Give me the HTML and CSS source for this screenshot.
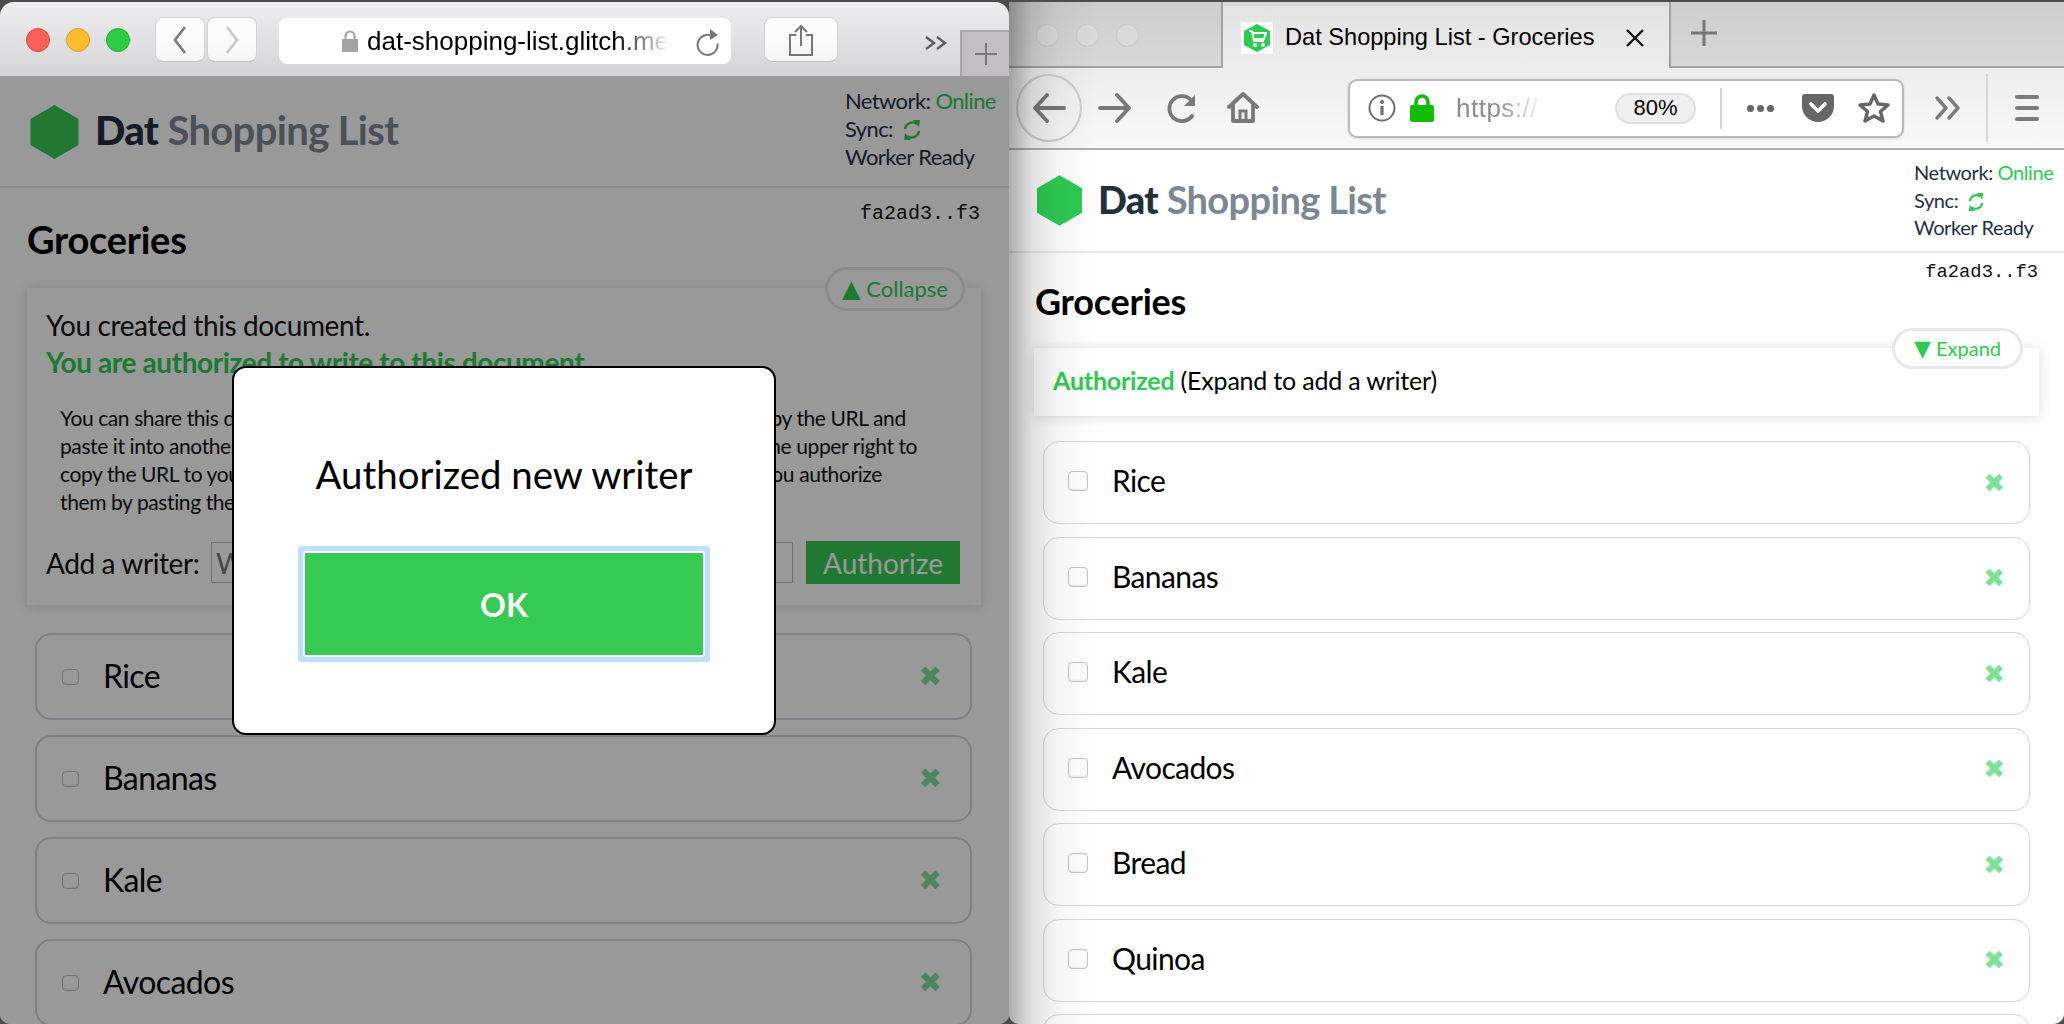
FILE: index.html
```html
<!DOCTYPE html>
<html lang="en">
<head>
  <meta charset="UTF-8">
  <title>Dat Shopping List - Groceries</title>
  <link rel="stylesheet" href="styles.css">
</head>
<body>

<div class="desktop">

  <!-- left window: safari with the dialog open -->
  <section class="safari">
    <div class="saf-toolbar">
      <div class="lights">
        <span class="light red"></span>
        <span class="light yellow"></span>
        <span class="light green"></span>
      </div>
      <div class="nav-pair">
        <button class="saf-btn nav-btn">
          <svg width="20" height="32" viewBox="0 0 20 32"><path d="M15 3 L5 16 L15 29" fill="none" stroke="#7b7b7b" stroke-width="2.6"/></svg>
        </button>
        <button class="saf-btn nav-btn">
          <svg width="20" height="32" viewBox="0 0 20 32"><path d="M5 3 L15 16 L5 29" fill="none" stroke="#c8c8c8" stroke-width="2.6"/></svg>
        </button>
      </div>
      <div class="saf-url">
        <svg class="saf-lock" width="18" height="24" viewBox="0 0 18 24"><path d="M4.500 11 V7 a4.500 4.500 0 0 1 9 0 V11" fill="none" stroke="#a3a3a3" stroke-width="2.2"/><rect x="1" y="10" width="16" height="13" rx="1" fill="#a3a3a3"/></svg>
        <span class="saf-host">dat-shopping-list.glitch.me</span>
        <svg class="saf-reload" width="26" height="32" viewBox="0 0 26 32"><path d="M18 9.500 A10 10 0 1 0 22.500 16.500" fill="none" stroke="#777" stroke-width="2"/><path d="M15 2 L23 8 L15 13 Z" fill="#777"/></svg>
      </div>
      <button class="saf-btn share-btn">
        <svg width="26" height="32" viewBox="0 0 26 32"><path d="M8 11 H2 V31 H24 V11 H18 M13 22 V2 M7 8 L13 2 L19 8" fill="none" stroke="#777" stroke-width="2"/></svg>
      </button>
      <svg class="saf-more" width="24" height="16" viewBox="0 0 24 16"><path d="M2 2 L10 8 L2 14 M13 2 L21 8 L13 14" fill="none" stroke="#5f5f5f" stroke-width="2.4"/></svg>
      <div class="saf-newtab">
        <svg width="24" height="24" viewBox="0 0 24 24"><path d="M12 1 V23 M1 12 H23" stroke="#777" stroke-width="2"/></svg>
      </div>
    </div>

    <div class="page">
      <header class="app-head">
        <div class="brand">
          <svg class="hex" viewBox="0 0 48 54"><path d="M24 0 L48 14 V40 L24 54 L0 40 V14 Z" fill="#36c954"/></svg>
          <h1 class="app-title"><b>Dat</b> <span>Shopping List</span></h1>
        </div>
        <div class="status">
          <div>Network: <span class="online">Online</span></div>
          <div>Sync:
            <svg class="sync" width="20" height="22" viewBox="0 0 20 22"><path d="M3 10 A7.500 7.500 0 0 1 15 5 M17 12 A7.500 7.500 0 0 1 5 17" fill="none" stroke="#36c954" stroke-width="2.400"/><path d="M11 1 L18 1 L17 8 Z M9 21 L2 21 L3 14 Z" fill="#36c954"/></svg>
          </div>
          <div>Worker Ready</div>
        </div>
      </header>

      <div class="doc-key">fa2ad3..f3</div>
      <h2 class="doc-title">Groceries</h2>

      <div class="panel panel-open">
        <button class="pill"><span class="tri">▲</span> Collapse</button>
        <div class="created">You created this document.</div>
        <div class="authed">You are authorized to write to this document.</div>
        <p class="share">
          You can share this document with other people on all of their devices too. Just copy the URL and<br>
          paste it into another new web browser tabs. Tip: press the big green hexagon at the upper right to<br>
          copy the URL to your clipboard. Other people can also write to this document if you authorize<br>
          them by pasting their key here.
        </p>
        <div class="add-writer">
          <label>Add a writer:</label>
          <input class="writer-input" type="text" placeholder="Writer key">
          <button class="authorize">Authorize</button>
        </div>
      </div>

      <div class="items">
        <div class="item"><input type="checkbox"><span class="name">Rice</span><span class="del">✖</span></div>
        <div class="item"><input type="checkbox"><span class="name">Bananas</span><span class="del">✖</span></div>
        <div class="item"><input type="checkbox"><span class="name">Kale</span><span class="del">✖</span></div>
        <div class="item"><input type="checkbox"><span class="name">Avocados</span><span class="del">✖</span></div>
      </div>

      <div class="dim"></div>
    </div>

    <div class="dialog">
      <div class="dialog-text">Authorized new writer</div>
      <button class="dialog-ok">OK</button>
    </div>
  </section>

  <!-- right window: firefox -->
  <section class="firefox">
    <div class="ff-tabs">
      <div class="ff-lights">
        <span></span><span></span><span></span>
      </div>
      <div class="ff-tab">
        <svg class="favicon" width="32" height="32" viewBox="0 0 32 32">
          <rect width="32" height="32" fill="#fff"/>
          <path d="M16 2 L29 9 V23 L16 30 L3 23 V9 Z" fill="#2ecb52"/>
          <path d="M8 9 H11 L13 19 H23 M11.500 11 H25 L23 17 H13" fill="none" stroke="#fff" stroke-width="2"/>
          <circle cx="14" cy="23" r="2" fill="#fff"/><circle cx="22" cy="23" r="2" fill="#fff"/>
        </svg>
        <span class="tab-title">Dat Shopping List - Groceries</span>
        <svg class="tab-close" width="20" height="20" viewBox="0 0 20 20"><path d="M2 2 L18 18 M18 2 L2 18" stroke="#111" stroke-width="2.400"/></svg>
      </div>
      <div class="ff-newtab">
        <svg width="28" height="28" viewBox="0 0 28 28"><path d="M14 1 V27 M1 14 H27" stroke="#777" stroke-width="3"/></svg>
      </div>
    </div>

    <div class="ff-toolbar">
      <div class="ff-back">
        <svg width="34" height="30" viewBox="0 0 34 30"><path d="M32 15 H3 M15 2 L3 15 L15 28" fill="none" stroke="#787878" stroke-width="3.800" stroke-linecap="round" stroke-linejoin="round"/></svg>
      </div>
      <svg class="ff-icon ff-forward" width="34" height="30" viewBox="0 0 34 30"><path d="M2 15 H31 M19 2 L31 15 L19 28" fill="none" stroke="#787878" stroke-width="3.800" stroke-linecap="round" stroke-linejoin="round"/></svg>
      <svg class="ff-icon ff-reload" width="32" height="30" viewBox="0 0 32 30"><path d="M25 7 A12.500 12.500 0 1 0 26 23" fill="none" stroke="#787878" stroke-width="3.800" stroke-linecap="round"/><path d="M29 2 V13 H18 Z" fill="#787878"/></svg>
      <svg class="ff-icon ff-home" width="32" height="32" viewBox="0 0 32 32"><path d="M2 15 L16 2 L30 15 M6 13 V29 H26 V13" fill="none" stroke="#787878" stroke-width="3.800" stroke-linecap="round" stroke-linejoin="round"/><path d="M13 29 V19 H19 V29 Z" fill="none" stroke="#787878" stroke-width="3"/></svg>

      <div class="ff-url">
        <svg class="ff-info" width="28" height="28" viewBox="0 0 28 28"><circle cx="14" cy="14" r="12.500" fill="none" stroke="#6e6e6e" stroke-width="2"/><circle cx="14" cy="8" r="2" fill="#6e6e6e"/><path d="M14 12 V21" stroke="#6e6e6e" stroke-width="3.200"/></svg>
        <svg class="ff-lock" width="24" height="28" viewBox="0 0 24 28"><path d="M6 13 V8 a6 6 0 0 1 12 0 V13" fill="none" stroke="#12bc00" stroke-width="3.600"/><rect y="11" width="24" height="17" rx="2" fill="#12bc00"/></svg>
        <span class="ff-host">https://</span>
        <span class="zoom-pill">80%</span>
        <span class="url-sep"></span>
        <span class="dots"><i></i><i></i><i></i></span>
        <svg class="pocket" width="32" height="28" viewBox="0 0 32 28"><path d="M3 0 H29 a3 3 0 0 1 3 3 V12 A16 16 0 0 1 0 12 V3 a3 3 0 0 1 3-3 Z" fill="#666"/><path d="M9 10 L16 17 L23 10" fill="none" stroke="#fff" stroke-width="3.600" stroke-linecap="round" stroke-linejoin="round"/></svg>
        <svg class="star" width="32" height="32" viewBox="0 0 32 32"><path d="M16 3 L20 12 L30 13 L22.500 19.500 L25 29 L16 24 L7 29 L9.500 19.500 L2 13 L12 12 Z" fill="none" stroke="#666" stroke-width="3.400" stroke-linejoin="round"/></svg>
      </div>

      <svg class="ff-icon ff-more" width="28" height="26" viewBox="0 0 28 26"><path d="M3 3 L12 13 L3 23 M15 3 L24 13 L15 23" fill="none" stroke="#7b7b7b" stroke-width="3.400" stroke-linecap="round" stroke-linejoin="round"/></svg>
      <span class="ff-sep"></span>
      <div class="burger"><i></i><i></i><i></i></div>
    </div>

    <div class="page">
      <header class="app-head">
        <div class="brand">
          <svg class="hex" viewBox="0 0 48 54"><path d="M24 0 L48 14 V40 L24 54 L0 40 V14 Z" fill="#2ecb52"/></svg>
          <h1 class="app-title"><b>Dat</b> <span>Shopping List</span></h1>
        </div>
        <div class="status">
          <div>Network: <span class="online">Online</span></div>
          <div>Sync:
            <svg class="sync" width="18" height="20" viewBox="0 0 20 22"><path d="M3 10 A7.500 7.500 0 0 1 15 5 M17 12 A7.500 7.500 0 0 1 5 17" fill="none" stroke="#2ecb52" stroke-width="2.400"/><path d="M11 1 L18 1 L17 8 Z M9 21 L2 21 L3 14 Z" fill="#2ecb52"/></svg>
          </div>
          <div>Worker Ready</div>
        </div>
      </header>

      <div class="doc-key">fa2ad3..f3</div>
      <h2 class="doc-title">Groceries</h2>

      <div class="panel panel-closed">
        <button class="pill"><span class="tri">▼</span> Expand</button>
        <span class="authed">Authorized</span> (Expand to add a writer)
      </div>

      <div class="items">
        <div class="item"><input type="checkbox"><span class="name">Rice</span><span class="del">✖</span></div>
        <div class="item"><input type="checkbox"><span class="name">Bananas</span><span class="del">✖</span></div>
        <div class="item"><input type="checkbox"><span class="name">Kale</span><span class="del">✖</span></div>
        <div class="item"><input type="checkbox"><span class="name">Avocados</span><span class="del">✖</span></div>
        <div class="item"><input type="checkbox"><span class="name">Bread</span><span class="del">✖</span></div>
        <div class="item"><input type="checkbox"><span class="name">Quinoa</span><span class="del">✖</span></div>
        <div class="item"></div>
      </div>
    </div>
  </section>

</div>

</body>
</html>
```

FILE: styles.css
```css
* {
  box-sizing: border-box;
}
html, body {
  height: 100%;
  margin: 0;
  overflow: hidden;
}
body {
  background: #4c4c4c;
  font-family: Lato, "Noto Sans", sans-serif;
  color: #111;
}
button {
  font-family: inherit;
  cursor: pointer;
}
h1, h2, p {
  margin: 0;
}

.desktop {
  display: flex;
  height: 1022px;
  margin-top: 2px;
}

/* shared page */
.page {
  position: relative;
  background: #fff;
  overflow: hidden;
  flex: 1;
}
.app-head {
  display: flex;
  justify-content: space-between;
  border-bottom: 2px solid #e8e8e8;
}
.brand {
  display: flex;
  align-items: center;
}
.app-title {
  font-weight: 700;
  color: #7c8794;
  letter-spacing: -.65px;
}
.app-title b {
  color: #25303f;
}
.status {
  color: #25303f;
  white-space: nowrap;
}
.online {
  color: #2ecb52;
}
.sync {
  vertical-align: -4px;
  margin-left: 4px;
}
.doc-key {
  font-family: "Liberation Mono", monospace;
  text-align: right;
  color: #111;
}
.doc-title {
  font-weight: 700;
  color: #000;
}
.panel {
  position: relative;
  background: #fff;
  box-shadow: 0 1px 12px rgba(0, 0, 0, .14);
}
.pill {
  position: absolute;
  background: #fff;
  color: #2ecb52;
  border: 3px solid #e8e8e8;
  border-radius: 24px;
  padding: 0;
  white-space: nowrap;
}
.tri {
  font-family: "DejaVu Sans", sans-serif;
  font-size: 1.1em;
}
.authed {
  color: #2ecb52;
  font-weight: 700;
}
.items {
  display: flex;
  flex-direction: column;
}
.item {
  display: flex;
  align-items: center;
  flex: none;
  background: #fff;
  border-style: solid;
  border-color: #d6d6dc;
  border-radius: 16px;
}
.item input {
  appearance: none;
  margin: 0;
  flex: none;
  background: #fff;
  border: 1.5px solid #c4c4c4;
  border-radius: 4px;
  box-shadow: inset 0 -1px 2px rgba(0, 0, 0, .08);
}
.item .name {
  flex: 1;
  color: #000;
  letter-spacing: -.6px;
}
.del {
  font-family: "DejaVu Sans", sans-serif;
  color: #7fe09a;
  line-height: 1;
}

/* safari window */
.safari {
  position: relative;
  width: 1009px;
  flex: none;
  display: flex;
  flex-direction: column;
  border-radius: 14px 14px 10px 10px;
  overflow: hidden;
  z-index: 2;
}
.saf-toolbar {
  position: relative;
  height: 74px;
  flex: none;
  display: flex;
  align-items: flex-start;
  background: linear-gradient(#eeedef, #d5d4d7);
}
.lights {
  display: flex;
  gap: 16px;
  margin: 26px 0 0 26px;
}
.light {
  width: 24px;
  height: 24px;
  border-radius: 50%;
}
.red { background: #fd5f5b; border: 1px solid #e2463f; }
.yellow { background: #febc2f; border: 1px solid #dfa023; }
.green { background: #2ecb45; border: 1px solid #1dad2b; }
.saf-btn {
  height: 45px;
  padding: 0;
  background: linear-gradient(#fff, #f6f6f6);
  border: 1px solid #d2d2d2;
  border-bottom-color: #bdbdbd;
  border-radius: 8px;
  display: flex;
  align-items: center;
  justify-content: center;
}
.nav-pair {
  display: flex;
  gap: 2px;
  margin: 15px 0 0 25px;
}
.nav-btn {
  width: 50px;
}
.saf-url {
  width: 452px;
  height: 46px;
  margin: 16px 0 0 22px;
  background: #fff;
  border-radius: 8px;
  display: flex;
  align-items: center;
  padding-left: 62px;
  position: relative;
}
.saf-lock {
  flex: none;
}
.saf-host {
  margin-left: 8px;
  width: 302px;
  overflow: hidden;
  white-space: nowrap;
  font-family: "Liberation Sans", Arial, sans-serif;
  font-size: 26px;
  color: #000;
  -webkit-mask-image: linear-gradient(to right, #000 82%, transparent 100%);
  mask-image: linear-gradient(to right, #000 82%, transparent 100%);
}
.saf-reload {
  position: absolute;
  right: 10px;
  top: 9px;
}
.share-btn {
  width: 74px;
  margin: 15px 0 0 33px;
}
.saf-more {
  margin: 33px 0 0 86px;
  flex: none;
}
.saf-newtab {
  position: absolute;
  right: 0;
  top: 28px;
  width: 49px;
  height: 46px;
  background: #c1bfc2;
  border: 2px solid #a8a8a8;
  border-bottom: 0;
  border-right: 0;
  display: flex;
  align-items: center;
  justify-content: center;
}

.safari .app-head {
  height: 112px;
  padding: 11px 12px 0 30px;
}
.safari .brand {
  align-items: flex-start;
  gap: 16px;
  padding-top: 18px;
}
.safari .hex {
  width: 49px;
  height: 54px;
}
.safari .app-title {
  font-size: 40px;
  line-height: 50px;
}
.safari .status {
  font-size: 22px;
  line-height: 28px;
  width: 152px;
  letter-spacing: -.6px;
}
.safari .doc-key {
  font-size: 20px;
  line-height: 24px;
  margin-top: 14px;
  padding-right: 29px;
}
.safari .doc-title {
  font-size: 38px;
  line-height: 40px;
  letter-spacing: -.25px;
  margin: -7px 0 29px 27px;
}
.panel-open {
  margin: 0 28px 0 27px;
  height: 317px;
  padding: 19px 19px 0;
}
.panel-open .pill {
  top: -21px;
  right: 16px;
  width: 140px;
  height: 44px;
  font-size: 22px;
}
.created, .panel-open .authed {
  font-size: 28px;
  line-height: 37px;
  letter-spacing: -.4px;
}
.share {
  margin: 23px 0 0 14px;
  font-size: 21px;
  line-height: 28px;
  white-space: nowrap;
  letter-spacing: -.4px;
}
.add-writer {
  display: flex;
  align-items: center;
  margin-top: 25px;
  height: 43px;
  font-size: 28px;
}
.add-writer label {
  width: 165px;
  flex: none;
  white-space: nowrap;
  letter-spacing: -.4px;
}
.writer-input {
  width: 582px;
  height: 41px;
  padding: 0 4px;
  border: 1px solid #bbb;
  font-family: inherit;
  font-size: 28px;
}
.authorize {
  width: 154px;
  height: 43px;
  margin-left: 13px;
  border: 0;
  padding: 0;
  background: #36c954;
  color: #fff;
  font-size: 28px;
}
.safari .items {
  gap: 15px;
  margin: 28px 37px 0 35px;
}
.safari .item {
  height: 87px;
  border-width: 2px;
  padding: 0 28px 0 25px;
}
.safari .item input {
  width: 17px;
  height: 16px;
}
.safari .name {
  font-size: 32px;
  margin-left: 24px;
  padding-bottom: 3px;
}
.safari .del {
  font-size: 28px;
}
.dim {
  position: absolute;
  inset: 0;
  background: rgba(0, 0, 0, .4);
}
.dialog {
  position: absolute;
  left: 232px;
  top: 364px;
  width: 544px;
  height: 369px;
  display: flex;
  flex-direction: column;
  align-items: center;
  background: #fff;
  border: 2px solid #000;
  border-radius: 14px;
}
.dialog-text {
  margin-top: 82px;
  font-size: 38.400px;
  line-height: 48px;
  color: #000;
}
.dialog-ok {
  width: 398px;
  height: 102px;
  margin-top: 55px;
  border: 0;
  border-radius: 1px;
  padding: 0;
  background: #36c954;
  color: #fff;
  font-size: 32px;
  font-weight: 700;
  box-shadow: 0 0 0 2px #fff, 0 0 0 7px #c0dfff;
}

/* firefox window */
.firefox {
  position: relative;
  flex: 1;
  min-width: 0;
  display: flex;
  flex-direction: column;
  border-radius: 0 0 10px 10px;
  overflow: hidden;
}
.firefox::after {
  content: "";
  position: absolute;
  left: 0;
  top: 0;
  bottom: 0;
  width: 90px;
  background: linear-gradient(to right, rgba(0, 0, 0, .32), rgba(0, 0, 0, .12) 25%, rgba(0, 0, 0, .04) 55%, rgba(0, 0, 0, 0));
  pointer-events: none;
}
.ff-tabs {
  position: relative;
  height: 66px;
  flex: none;
  display: flex;
  background: linear-gradient(#cdcdcd, #d8d8d8);
  border-bottom: 2px solid #a2a2a2;
}
.ff-lights {
  display: flex;
  gap: 17px;
  width: 212px;
  padding: 22px 0 0 27px;
}
.ff-lights span {
  width: 23px;
  height: 23px;
  border-radius: 50%;
  background: #dadada;
  border: 1px solid #cacaca;
}
.ff-tab {
  width: 450px;
  height: 66px;
  display: flex;
  align-items: center;
  padding: 5px 0 0 18px;
  background: linear-gradient(#d9d9d9 0, #d9d9d9 4px, #e3e3e3 4px, #ececec);
  border-left: 2px solid #a2a2a2;
  border-right: 2px solid #a2a2a2;
}
.favicon {
  flex: none;
}
.tab-title {
  margin-left: 12px;
  font-family: "Liberation Sans", Arial, sans-serif;
  font-size: 23.600px;
  color: #000;
  white-space: nowrap;
}
.tab-close {
  margin-left: auto;
  margin-right: 24px;
}
.ff-newtab {
  display: flex;
  align-items: center;
  margin-left: 19px;
  padding-bottom: 2px;
}
.ff-toolbar {
  position: relative;
  height: 82px;
  flex: none;
  display: flex;
  align-items: center;
  background: linear-gradient(#ededed, #f9f9f9);
  border-bottom: 2px solid #b2b2b2;
}
.ff-back {
  width: 66px;
  height: 68px;
  margin-left: 7px;
  flex: none;
  display: flex;
  align-items: center;
  justify-content: center;
  border: 2px solid #cdcdcd;
  border-radius: 50%;
}
.ff-icon {
  flex: none;
}
.ff-forward {
  margin-left: 16px;
}
.ff-reload {
  margin-left: 34px;
}
.ff-home {
  margin-left: 29px;
}
.ff-url {
  width: 556px;
  height: 59px;
  margin-left: 89px;
  flex: none;
  display: flex;
  align-items: center;
  padding-left: 18px;
  background: #fff;
  border: 2px solid #b9b9b9;
  border-radius: 9px;
  box-shadow: 0 1px 3px rgba(0, 0, 0, .12);
}
.ff-info {
  flex: none;
}
.ff-lock {
  flex: none;
  margin-left: 14px;
}
.ff-host {
  width: 88px;
  margin-left: 22px;
  overflow: hidden;
  white-space: nowrap;
  font-family: "Liberation Sans", Arial, sans-serif;
  font-size: 26px;
  color: #8b8b8b;
  letter-spacing: .5px;
  -webkit-mask-image: linear-gradient(to right, #000 45%, transparent 100%);
  mask-image: linear-gradient(to right, #000 45%, transparent 100%);
}
.zoom-pill {
  width: 81px;
  height: 31px;
  margin-left: 71px;
  flex: none;
  display: flex;
  align-items: center;
  justify-content: center;
  background: #efefef;
  border: 2px solid #dedede;
  border-radius: 16px;
  font-family: "Liberation Sans", Arial, sans-serif;
  font-size: 22px;
  color: #000;
}
.url-sep {
  width: 2px;
  height: 41px;
  margin-left: 24px;
  background: #d5d5d5;
}
.dots {
  display: flex;
  gap: 3px;
  margin-left: 25px;
}
.dots i {
  width: 7px;
  height: 7px;
  border-radius: 50%;
  background: #666;
}
.pocket {
  flex: none;
  margin-left: 28px;
}
.star {
  flex: none;
  margin-left: 24px;
}
.ff-more {
  margin-left: 30px;
}
.ff-sep {
  width: 2px;
  height: 68px;
  margin-left: 24px;
  background: #d6d6d6;
}
.burger {
  display: flex;
  flex-direction: column;
  gap: 7px;
  width: 24px;
  margin-left: 27px;
}
.burger i {
  height: 4px;
  border-radius: 2px;
  background: #7b7b7b;
}

.firefox .app-head {
  height: 103px;
  padding: 9px 10px 0 28px;
}
.firefox .brand {
  align-items: flex-start;
  gap: 16px;
  padding-top: 16px;
}
.firefox .hex {
  width: 45px;
  height: 51px;
}
.firefox .app-title {
  font-size: 38px;
  line-height: 49px;
}
.firefox .status {
  font-size: 20px;
  line-height: 27.500px;
  width: 140px;
  letter-spacing: -.4px;
}
.firefox .doc-key {
  font-size: 18.800px;
  line-height: 22px;
  margin-top: 8px;
  padding-right: 26px;
}
.firefox .doc-title {
  font-size: 36px;
  line-height: 40px;
  letter-spacing: -.25px;
  margin: -2px 0 27px 26px;
}
.panel-closed {
  margin: 0 25px;
  height: 68px;
  padding-left: 19px;
  font-size: 25px;
  line-height: 65px;
  letter-spacing: -.2px;
  color: #000;
}
.panel-closed .pill {
  top: -20px;
  right: 16px;
  width: 131px;
  height: 41px;
  font-size: 20px;
  line-height: 1;
}
.firefox .items {
  gap: 12.500px;
  margin: 25px 34px 0;
}
.firefox .item {
  height: 83px;
  border-width: 1.500px;
  padding: 0 24px 0 24px;
}
.firefox .item input {
  width: 20px;
  height: 20px;
  margin-top: -3px;
}
.firefox .name {
  font-size: 30px;
  margin-left: 24px;
  padding-bottom: 5px;
}
.firefox .del {
  font-size: 26px;
}
```
